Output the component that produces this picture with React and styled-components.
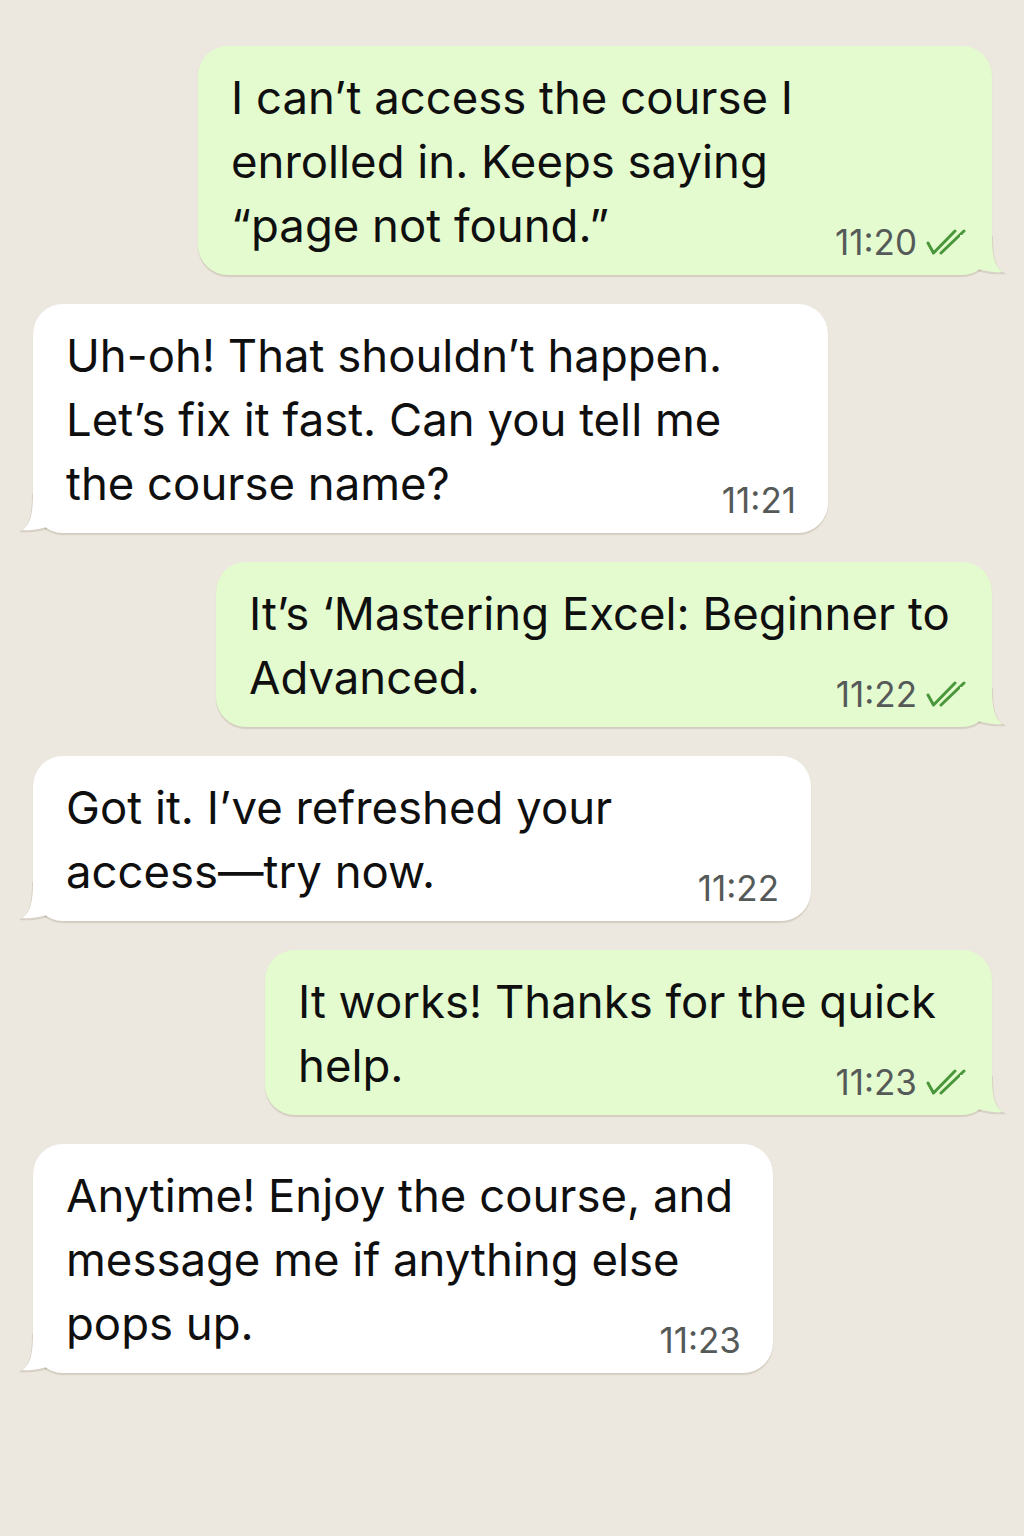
import React from 'react';
import styled, { createGlobalStyle } from 'styled-components';

const GlobalStyle = createGlobalStyle`
  html, body {
    margin: 0;
    padding: 0;
    background: #ede8df;
  }
  body {
    font-family: Inter, "Noto Sans", "Liberation Sans", sans-serif;
    -webkit-font-smoothing: antialiased;
  }
`

const Page = styled.div`
  width: 1024px;
  min-height: 1536px;
  box-sizing: border-box;
  padding: 46px 32px 0 33px;
  display: flex;
  flex-direction: column;
  gap: 29px;
  background: #ede8df;
`

const Row = styled.div`
  display: flex;
  justify-content: ${p => (p.$out ? 'flex-end' : 'flex-start')};
`

const Bubble = styled.div`
  position: relative;
  width: ${p => p.$width}px;
  box-sizing: border-box;
  padding: 20px ${p => (p.$out ? 26 : 32)}px 17px 33px;
  background: ${p => (p.$out ? '#e4fbcf' : '#ffffff')};
  border-radius: 30px;
  box-shadow: 0 1.5px 1px rgba(90, 70, 40, 0.16);
  display: grid;
`

const Text = styled.div`
  grid-area: 1 / 1;
  font-size: 45.5px;
  line-height: 64px;
  color: #0f0f0f;
`

const Line = styled.span`
  display: block;
  white-space: nowrap;
`

const Meta = styled.div`
  grid-area: 1 / 1;
  justify-self: end;
  align-self: end;
  display: flex;
  align-items: center;
  gap: 9px;
  font-size: 35px;
  line-height: 32px;
  color: #555a58;
`

const Tail = styled.svg`
  position: absolute;
  bottom: 0;
  width: 44px;
  height: 40px;
  overflow: visible;
  ${p => (p.$out ? 'right: -12px;' : 'left: -12px; transform: scaleX(-1);')}
`

const Ticks = () => (
  <svg width="40" height="28" viewBox="0 0 40 28" fill="none" stroke="#4a963b" strokeWidth="3" strokeLinecap="round" strokeLinejoin="round">
    <path d="M2 15 L7.5 25 L29 3" />
    <path d="M15 25 L38 3" />
  </svg>
)

const TAIL_EDGE = 'M32 0 C32 22 35 32 43 37 C36 37.6 26 36 18 34';
const TAIL_FILL = 'M0 0 H32 C32 22 35 32 43 37 C36 37.6 26 36 18 34 L0 34 Z';

const messages = [
  { out: true, width: 794, time: '11:20', lines: ['I can\u2019t access the course I', 'enrolled in. Keeps saying', '\u201cpage not found.\u201d'] },
  { out: false, width: 795, time: '11:21', lines: ['Uh-oh! That shouldn\u2019t happen.', 'Let\u2019s fix it fast. Can you tell me', 'the course name?'] },
  { out: true, width: 776, time: '11:22', lines: ['It\u2019s \u2018Mastering Excel: Beginner to', 'Advanced.'] },
  { out: false, width: 778, time: '11:22', lines: ['Got it. I\u2019ve refreshed your', 'access\u2014try now.'] },
  { out: true, width: 727, time: '11:23', lines: ['It works! Thanks for the quick', 'help.'] },
  { out: false, width: 740, time: '11:23', lines: ['Anytime! Enjoy the course, and', 'message me if anything else', 'pops up.'] },
]

const Message = ({ msg }) => (
  <Row $out={msg.out}>
    <Bubble $out={msg.out} $width={msg.width}>
      <Tail $out={msg.out} viewBox="0 0 44 40">
        <path d={TAIL_EDGE} fill="none" stroke="rgba(90, 70, 40, 0.14)" strokeWidth="2" transform="translate(0 1.2)" />
        <path d={TAIL_FILL} fill={msg.out ? '#e4fbcf' : '#ffffff'} />
      </Tail>
      <Text>
        {msg.lines.map((l, i) => <Line key={i}>{l}</Line>)}
      </Text>
      <Meta>
        <span>{msg.time}</span>
        {msg.out && <Ticks />}
      </Meta>
    </Bubble>
  </Row>
)

const App = () => (
  <>
    <GlobalStyle />
    <Page>
      {messages.map((m, i) => <Message key={i} msg={m} />)}
    </Page>
  </>
)

export default App
